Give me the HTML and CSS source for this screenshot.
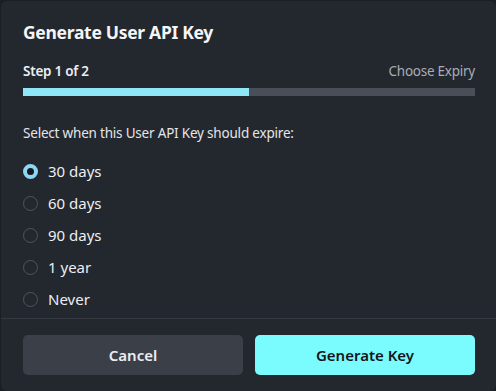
FILE: index.html
```html
<!DOCTYPE html>
<html lang="en">
<head>
    <meta charset="UTF-8">
    <title>Generate User API Key</title>
    <link rel="stylesheet" href="styles.css">
</head>
<body>
    <div class="dialog">
        <div class="dialog-body">
            <h1>Generate User API Key</h1>
            <div class="step-row">
                <span class="step">Step 1 of 2</span>
                <span class="step-name">Choose Expiry</span>
            </div>
            <div class="progress"><div class="progress-fill" style="width: 50%"></div></div>
            <p class="prompt">Select when this User API Key should expire:</p>
            <div class="options">
                <label class="option"><input type="radio" name="expiry" checked><span class="dot"></span>30 days</label>
                <label class="option"><input type="radio" name="expiry"><span class="dot"></span>60 days</label>
                <label class="option"><input type="radio" name="expiry"><span class="dot"></span>90 days</label>
                <label class="option"><input type="radio" name="expiry"><span class="dot"></span>1 year</label>
                <label class="option"><input type="radio" name="expiry"><span class="dot"></span>Never</label>
            </div>
        </div>
        <div class="dialog-footer">
            <button class="btn btn-cancel">Cancel</button>
            <button class="btn btn-primary">Generate Key</button>
        </div>
    </div>
</body>
</html>
```

FILE: styles.css
```css
* {
    box-sizing: border-box;
}
body {
    margin: 0;
    background: #1b1e23;
    font-family: 'Noto Sans', 'Open Sans', sans-serif;
    color: #e8eaed;
}
.dialog {
    width: 496px;
    height: 391px;
    background: #23272e;
    border-top: 1px solid #1b1e23;
    border-left: 1px solid #1b1e23;
    border-radius: 6px;
    display: flex;
    flex-direction: column;
}
.dialog-body {
    padding: 18px 21px 0 22px;
    flex: 1;
}
h1 {
    margin: 0;
    font-size: 17.5px;
    letter-spacing: -0.3px;
    font-weight: 700;
    color: #f4f5f7;
    line-height: 26px;
}
.step-row {
    display: flex;
    justify-content: space-between;
    margin-top: 16px;
    font-size: 13.5px;
    letter-spacing: -0.25px;
    line-height: 20px;
}
.step {
    font-weight: 600;
    color: #eceef1;
}
.step-name {
    color: #a8adb5;
}
.progress {
    margin-top: 7px;
    height: 8px;
    background: #4a4e56;
}
.progress-fill {
    height: 100%;
    background: #8fe6f7;
}
.prompt {
    margin: 27px 0 0;
    font-size: 13.5px;
    letter-spacing: -0.2px;
    line-height: 20px;
    color: #e3e5e8;
}
.options {
    margin-top: 12px;
    display: flex;
    flex-direction: column;
}
.option {
    display: flex;
    align-items: center;
    height: 32px;
    font-size: 15px;
    color: #eceef1;
}
.option input {
    display: none;
}
.dot {
    width: 15px;
    height: 15px;
    border-radius: 50%;
    border: 1.5px solid #50555d;
    margin-right: 10px;
}
.option input:checked + .dot {
    border: 4.5px solid #8dd6f5;
    background: #15181c;
}
.dialog-footer {
    border-top: 1px solid #343942;
    display: flex;
    gap: 12px;
    padding: 16px 21px 16px 22px;
}
.btn {
    flex: 1;
    height: 40px;
    border: none;
    border-radius: 5px;
    font-family: inherit;
    font-size: 15px;
    font-weight: 600;
}
.btn-cancel {
    background: #3b4048;
    color: #eceef1;
}
.btn-primary {
    background: #7afcff;
    color: #14171b;
}
```
